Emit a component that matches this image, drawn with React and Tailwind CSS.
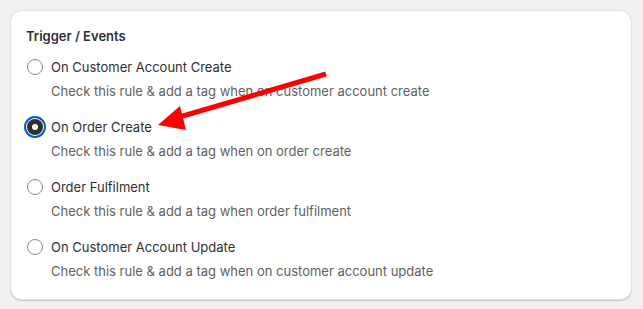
const events = [
  { label: 'On Customer Account Create', help: 'Check this rule & add a tag when on customer account create' },
  { label: 'On Order Create', help: 'Check this rule & add a tag when on order create', checked: true },
  { label: 'Order Fulfilment', help: 'Check this rule & add a tag when order fulfilment' },
  { label: 'On Customer Account Update', help: 'Check this rule & add a tag when on customer account update' },
];

const Radio = ({ checked }) =>
  checked ? (
    <span className="flex h-4 w-4 items-center justify-center rounded-full bg-[#303030] outline-2 outline-offset-1 outline-[#005bd3]">
      <span className="h-1.5 w-1.5 rounded-full bg-white"></span>
    </span>
  ) : (
    <span className="h-4 w-4 rounded-full border border-[#8a8a8a] bg-white"></span>
  );

export default function App() {
  return (
    <div className="relative min-h-[309px] bg-[#f1f1f1] p-[10px] font-['Inter',sans-serif] text-[13px] leading-5 text-[#303030]">
      <div className="w-[622px] rounded-xl border border-[#e3e3e3] bg-white px-[15px] pt-[15px] pb-[18px] shadow-[0_1px_1px_rgba(0,0,0,0.18)]">
        <h2 className="font-semibold">Trigger / Events</h2>
        <div className="mt-[11px] flex flex-col gap-4">
          {events.map((e) => (
            <label key={e.label} className="flex flex-col">
              <div className="flex items-center gap-2 pl-[1px]">
                <span className="flex w-4 justify-center">
                  <Radio checked={e.checked} />
                </span>
                <span>{e.label}</span>
              </div>
              <p className="mt-1 pl-[25px] text-[#616161]">{e.help}</p>
            </label>
          ))}
        </div>
      </div>
      <svg className="absolute left-0 top-0" width="643" height="309" viewBox="0 0 643 309">
        <line x1="326" y1="74" x2="176" y2="118" stroke="#ff0000" strokeWidth="5" />
        <polygon points="158,125 180,106 186,130" fill="#ff0000" />
      </svg>
    </div>
  );
}
